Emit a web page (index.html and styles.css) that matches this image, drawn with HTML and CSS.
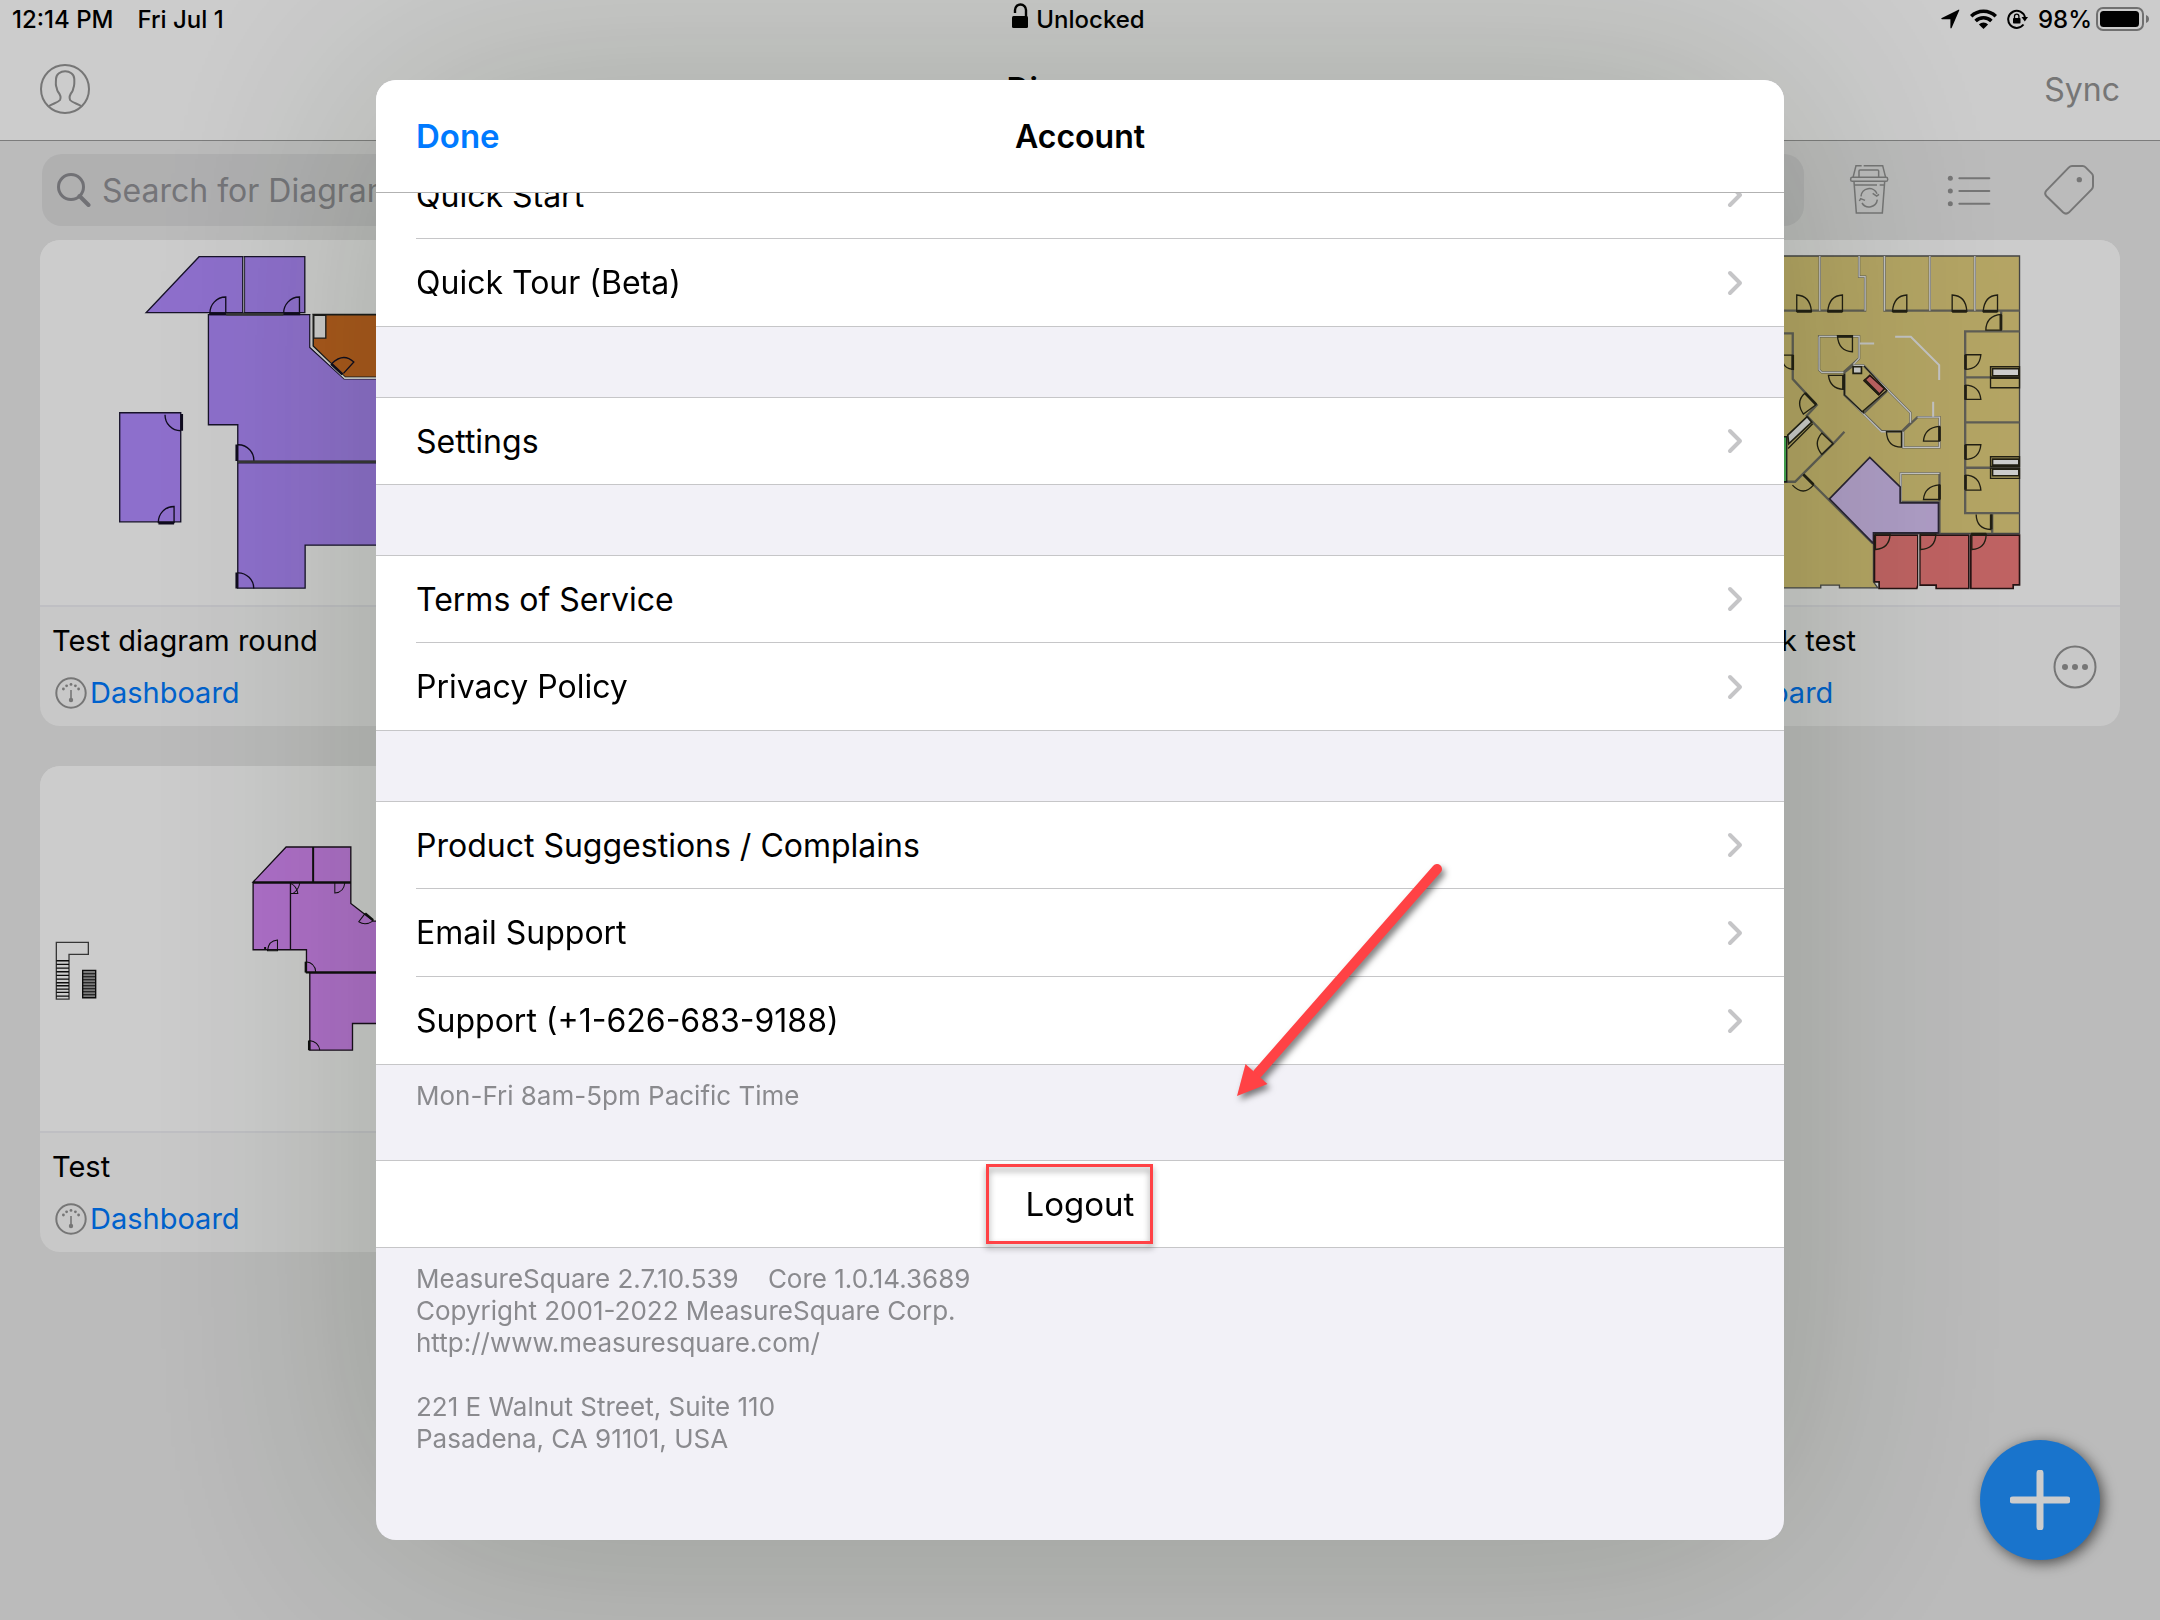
FILE: index.html
```html
<!DOCTYPE html>
<html lang="en">
<head>
<meta charset="utf-8">
<meta name="viewport" content="width=device-width, initial-scale=1">
<title>Diagrams</title>
<link rel="stylesheet" href="styles.css">
</head>
<body>
<svg class="defs" aria-hidden="true">
  <defs>
    <symbol id="chevron" viewBox="0 0 16 26"><path d="M3 3l10 10L3 23" fill="none" stroke="currentColor" stroke-width="4" stroke-linecap="round" stroke-linejoin="round"/></symbol>
    <symbol id="gauge" viewBox="0 0 32 32"><circle cx="16" cy="16" r="14.7" fill="none" stroke="currentColor" stroke-width="2"/><path d="M16 13v9" stroke="currentColor" stroke-width="1.6"/><g fill="currentColor"><circle cx="16" cy="23" r="2.2"/><circle cx="8.4" cy="12" r="1.4"/><circle cx="11.6" cy="8.8" r="1.4"/><circle cx="16" cy="7.4" r="1.4"/><circle cx="20.4" cy="8.8" r="1.4"/><circle cx="23.6" cy="12" r="1.4"/></g></symbol>
    <symbol id="more" viewBox="0 0 44 44"><circle cx="22" cy="22" r="20.5" fill="none" stroke="currentColor" stroke-width="2"/><g fill="currentColor"><circle cx="12" cy="22" r="3"/><circle cx="22" cy="22" r="3"/><circle cx="32" cy="22" r="3"/></g></symbol>
  </defs>
</svg>

<div class="app">
  <header class="topbar">
    <div class="status">
      <div class="status-left"><span>12:14 PM</span><span>Fri Jul 1</span></div>
      <div class="status-center">
        <svg width="16" height="26" viewBox="0 0 16 26" aria-hidden="true"><path d="M3 10V7a5.5 5.5 0 0 1 11 0v7" fill="none" stroke="#000" stroke-width="2.4"/><rect y="13" width="16" height="12" rx="1.5"/></svg>
        <span>Unlocked</span>
      </div>
      <div class="status-right">
        <svg width="19" height="20" viewBox="0 0 19 20" aria-hidden="true"><path d="M18.3 1.2L10.6 19q-.8 1-1.2-.2V10.300H1Q-.3 9.800.8 9L17.500.700q1-.3.8.5z"/></svg>
        <svg width="27" height="20" viewBox="0 0 27 20" aria-hidden="true"><g fill="none" stroke="#000" stroke-width="3.500"><path d="M1.200 7.300a17.500 17.500 0 0 1 24.600 0"/><path d="M5.600 12a11.200 11.200 0 0 1 15.800 0"/></g><path d="M13.500 20l-4.600-4.600a6.500 6.500 0 0 1 9.200 0z"/></svg>
        <svg width="21" height="20" viewBox="0 0 21 20" aria-hidden="true"><path d="M16.500 15.500A8.500 8.500 0 1 1 18 8.500" fill="none" stroke="#000" stroke-width="2"/><path d="M14.500 8H21l-3.200 4.600z"/><rect x="6" y="9" width="7.500" height="5.500" rx=".8"/><path d="M7.500 9V7.300a2.200 2.200 0 0 1 4.400 0V9" fill="none" stroke="#000" stroke-width="1.300"/></svg>
        <span class="battery">98%<svg width="54" height="26" viewBox="0 0 54 26" aria-hidden="true"><rect x="1" y="2" width="46" height="22" rx="6" fill="none" stroke="#000" stroke-opacity=".45" stroke-width="2"/><rect x="4" y="5" width="39" height="16" rx="3.500"/><path d="M50 9q3 1.200 3 4t-3 4z" fill-opacity=".45"/></svg></span>
      </div>
    </div>
    <nav class="nav">
      <button class="icon-button" aria-label="Account"><svg width="50" height="50" viewBox="0 0 50 50" fill="none" stroke="currentColor" stroke-width="2"><circle cx="25" cy="25" r="24"/><path d="M9 42c4-2.500 9-3.500 11-6 1.500-3-.5-6.500-2.200-8.500-1-1.500-.8-3.500-1.600-5C15.400 20 16 18 16 15c.3-10.300 18-10.300 18.300 0 0 3 .3 5-.4 7.500-.8 1.500-.6 3.500-1.600 5-1.700 2-3.500 5.500-2.200 8.500 2 2.500 7 3.500 11 6"/></svg></button>
      <h1 class="nav-title">Diagrams</h1>
      <button class="text-button sync">Sync</button>
    </nav>
  </header>

  <main class="library">
    <div class="toolbar">
      <label class="search">
        <svg width="34" height="34" viewBox="0 0 34 34" fill="none" stroke="currentColor" stroke-width="3" aria-hidden="true"><circle cx="14" cy="14" r="12.500"/><path d="M22.500 23l9 9" stroke-width="4" stroke-linecap="round"/></svg>
        <input type="search" placeholder="Search for Diagrams" aria-label="Search for Diagrams">
      </label>
      <div class="tools">
        <button class="icon-button" aria-label="Recycle bin"><svg width="50" height="50" viewBox="0 0 150 150" fill="none" stroke="currentColor" stroke-width="4.500"><path d="M27 38l9-36h17m6 0h57l9 36M45 36V18q0-3 3-3h53q3 0 3 3v18"/><rect x="20" y="37" width="111" height="12" rx="5"/><path d="M30 50l7 94h78l7-94M31 60h68m8 0h14"/><path d="M51 94a25 25 0 0 1 48-8M100 104a25 25 0 0 1-46 10M105 88l-7 5-12-8M46 108l4-7 13 5"/></svg></button>
        <button class="icon-button" aria-label="List view"><svg width="50" height="50" viewBox="0 0 150 150"><g fill="currentColor"><circle cx="19" cy="40" r="7.500"/><circle cx="19" cy="78" r="7.500"/><circle cx="19" cy="116" r="7.500"/></g><path d="M46 40h90M46 78h90M46 116h90" stroke="currentColor" stroke-width="6" stroke-linecap="round"/></svg></button>
        <button class="icon-button" aria-label="Tags"><svg width="50" height="50" viewBox="0 0 150 150"><path d="M84 3h32q5 0 9 4l18 18q4 4 4 9v30q0 5-4 9l-68 69q-9 8-18 0L7 93q-7-8 0-16L74 8q5-5 10-5z" fill="none" stroke="currentColor" stroke-width="6"/><circle cx="106" cy="44" r="8" fill="currentColor"/></svg></button>
      </div>
    </div>

    <div class="cards">
      <article class="card">
        <svg class="plan" viewBox="30 15 1458 1095" preserveAspectRatio="xMinYMin slice" role="img" aria-label="Floor plan">
          <g fill="#b18bff" stroke="#1d1733" stroke-width="4">
            <path d="M348 233L507 65H638V233zM643 65H824V233H643zM269 533H452V860H269z"/>
            <path d="M535 239H839V337L942 431H1240V679H623V569H535z"/>
            <path d="M623 683H1240V930H825V1059H623z"/>
          </g>
          <path d="M849 239H1240V427H945L849 333z" fill="#d46e23" stroke="#222" stroke-width="5"/>
          <path d="M851 241h36v68h-36z" fill="#fff" stroke="#222" stroke-width="4"/>
          <path d="M844 239v96l100 94h296" fill="none" stroke="#fff" stroke-width="5"/>
          <path d="M641 67v164" stroke="#fff" stroke-width="2"/>
          <g fill="none" stroke="#140f26" stroke-width="4">
            <path d="M587 237V186A47 47 0 0 0 540 237M808 237V186A47 47 0 0 0 761 237M405 539A47 47 0 0 0 452 587M432 864V814A47 47 0 0 0 385 864M623 629A47 47 0 0 1 671 681M623 1013A47 47 0 0 1 671 1060M905 385Q940 352 971 381L940 415"/>
            <path d="M538 237h50M760 237h50M455 537v50M385 864h47M620 628v50M620 1012v48M903 386l34 32" stroke-width="8"/>
            <path d="M588 238h172M623 680H1240" stroke="#444" stroke-width="8"/>
          </g>
        </svg>
        <div class="info">
          <div class="info-text">
            <h2 class="card-title">Test diagram round</h2>
            <a class="dash" href="#"><svg width="32" height="32"><use href="#gauge"/></svg>Dashboard</a>
          </div>
          <button class="icon-button" aria-label="More"><svg width="44" height="44"><use href="#more"/></svg></button>
        </div>
      </article>

      <article class="card card-last">
        <svg class="plan" viewBox="-318 15 1458 1095" preserveAspectRatio="xMinYMin slice" role="img" aria-label="Floor plan">
          <path d="M-200 63H838V895H400V1040L413 1058H298V1050H242V1058H-200z" fill="#e1ce7d" stroke="#555" stroke-width="4"/>
          <g fill="none" stroke="#77756a" stroke-width="7">
            <path d="M239 63V227M-200 227H375V125H357V63M433 63V227H838M569 63V227M704 63V227M783 230V288M838 289H675V834H838M675 427H838M675 562H838M675 698H838M756 836V894M0 295H158V432L230 510L200 542L280 625L313 590M280 625L165 740H100M190 718L265 793L398 925"/>
            <path d="M237 304H357V370L310 412H245L237 404zM340 391H370L511 533V563L486 588H424L313 480V412zM440 468L370 535M486 590L532 546H598V637H489V588M482 715H598V800H482zM598 800V895"/>
          </g>
          <g fill="none" stroke="#f4f4f4" stroke-width="4">
            <path d="M239 63V227M375 227V125H357V63M433 63V227M569 63V227M704 63V227M237 304H357V370L340 388M237 304V404L245 412H310M340 391H370L511 533V563M313 480L424 590H486M489 590V637H598V546H532M482 800V715H598"/>
            <path d="M465 305H512L597 390V435M359 325H402M579 500V545" stroke-width="6"/>
          </g>
          <path d="M268 791L389 667L480 755V803H595V893H400V925z" fill="#dac4f8" stroke="#332c40" stroke-width="5"/>
          <g fill="#ef7b7b" stroke="#301818" stroke-width="5">
            <path d="M403 900H533V1050L530 1060H417V1040H403zM539 900H686V1060H588V1050H539zM692 900H838V1049H819V1060H692zM389 421l44 40-17 18-44-42z"/>
          </g>
          <path d="M536 898V1056" stroke="#fff" stroke-width="3"/>
          <path d="M120 605h20V740h-20z" fill="#59d468" stroke="#222" stroke-width="4"/>
          <g fill="#fff" stroke="#2a2718" stroke-width="5">
            <path d="M757 401h79v21h-79zM757 672h79v18h-79zM757 702h79v20h-79zM339 395h25v20h-25zM143 600l58-55 14 16-69 65z"/>
          </g>
          <g fill="none" stroke="#2a2718" stroke-width="4">
            <path d="M751 395h87v31h-87zM751 430h87v28h-87zM751 665h87v29h-87zM751 699h87v31h-87zM313 416V480L366 530L440 466L372 393M144 640L218 566M370 535V528"/>
            <path d="M170 229V180Q210 182 214 229zM307 229V180Q267 182 263 229zM500 229V180Q461 182 457 229zM636 229V180Q677 182 680 229zM772 229V180Q733 182 729 229zM783 285V238Q738 242 737 285zM337 302V350Q295 348 292 302zM310 421V463Q270 461 265 421zM484 590V636Q441 636 439 590zM598 618V574Q553 578 550 618zM598 793V749Q553 753 550 793zM675 359H722Q718 402 675 403M675 493H722Q718 451 675 450M675 629H722Q718 672 675 673M675 765H722Q718 721 675 720M752 838V883Q709 881 708 838M695 897V943Q737 940 738 897zM541 897V943Q586 940 587 897zM406 897V943Q448 940 450 897zM195 474L228 509L190 537Q165 500 195 474zM245 594L279 626L245 658Q218 625 245 594zM190 718L220 750Q190 785 157 750M130 360H158V403Q135 400 130 385"/>
            <path d="M170 229h45M262 229h45M457 229h44M636 229h44M728 229h44M782 240v44M292 304h44M310 421v42M598 574v44M598 749v44M676 359v44M676 450v44M676 629v44M676 720v44M753 838v44M693 897h45M158 360v45M195 474l33 34M190 718l30 30M372 433l44 44" stroke-width="8"/>
          </g>
        </svg>
        <div class="info">
          <div class="info-text">
            <h2 class="card-title">North desk test</h2>
            <a class="dash" href="#"><svg width="32" height="32"><use href="#gauge"/></svg>Dashboard</a>
          </div>
          <button class="icon-button" aria-label="More"><svg width="44" height="44"><use href="#more"/></svg></button>
        </div>
      </article>

      <article class="card">
        <svg class="plan" viewBox="30 -42 1458 1095" preserveAspectRatio="xMinYMin slice" role="img" aria-label="Floor plan">
          <g fill="#da8bfb" stroke="#1c1020" stroke-width="4">
            <path d="M669 306L768 201H962V306zM669 308H781V509H669zM781 308H962V370L1030 423H1200V576H829V509H781zM839 578H1200V730H967V810H839z"/>
          </g>
          <g fill="none" stroke="#111" stroke-width="3">
            <path d="M849 201V306M669 307H962M827 577H1200" stroke-width="6"/>
            <path d="M781 340H803Q800 318 781 310M809 308Q806 328 790 339M914 308V339Q941 337 944 308M742 512V480Q715 482 712 512zM827 545Q855 548 857 576M837 781Q865 784 869 810M1005 400L986 425Q1005 438 1028 423"/>
            <path d="M827 545v32M837 781v29M1005 400l24 20M702 504h6" stroke-width="7"/>
          </g>
          <path d="M79 487H175V523H117V657H79z" fill="none" stroke="#444" stroke-width="4"/>
          <path d="M79 542h38M79 553h38M79 564h38M79 575h38M79 586h38M79 597h38M79 608h38M79 617h38M79 627h38M79 637h38M79 648h38" stroke="#111" stroke-width="4"/>
          <path d="M158 571h39v82h-39z" fill="#999" stroke="#111" stroke-width="4"/>
          <path d="M158 581h39M158 590h39M158 599h39M158 608h39M158 617h39M158 626h39M158 635h39M158 644h39" stroke="#111" stroke-width="3"/>
        </svg>
        <div class="info">
          <div class="info-text">
            <h2 class="card-title">Test</h2>
            <a class="dash" href="#"><svg width="32" height="32"><use href="#gauge"/></svg>Dashboard</a>
          </div>
          <button class="icon-button" aria-label="More"><svg width="44" height="44"><use href="#more"/></svg></button>
        </div>
      </article>
    </div>
  </main>

  <button class="fab" aria-label="New diagram"><svg width="60" height="60" viewBox="0 0 60 60"><path d="M30 3v54M3 30h54" stroke="#fff" stroke-width="7" stroke-linecap="round"/></svg></button>
</div>

<div class="backdrop">
  <section class="sheet" role="dialog" aria-labelledby="sheet-title">
    <header class="sheet-head">
      <button class="text-button done">Done</button>
      <h2 class="sheet-title" id="sheet-title">Account</h2>
    </header>
    <div class="sheet-body">
      <div class="group group-scrolled">
        <a class="row" href="#"><span>Quick Start</span><svg class="chev"><use href="#chevron"/></svg></a>
        <a class="row" href="#"><span>Quick Tour (Beta)</span><svg class="chev"><use href="#chevron"/></svg></a>
      </div>
      <div class="group">
        <a class="row" href="#"><span>Settings</span><svg class="chev"><use href="#chevron"/></svg></a>
      </div>
      <div class="group">
        <a class="row" href="#"><span>Terms of Service</span><svg class="chev"><use href="#chevron"/></svg></a>
        <a class="row" href="#"><span>Privacy Policy</span><svg class="chev"><use href="#chevron"/></svg></a>
      </div>
      <div class="group">
        <a class="row" href="#"><span>Product Suggestions / Complains</span><svg class="chev"><use href="#chevron"/></svg></a>
        <a class="row" href="#"><span>Email Support</span><svg class="chev"><use href="#chevron"/></svg></a>
        <a class="row" href="#"><span>Support (+1-626-683-9188)</span><svg class="chev"><use href="#chevron"/></svg></a>
        <svg class="arrow" width="220" height="250" viewBox="0 0 220 250" aria-hidden="true"><path d="M206 14L27 218" stroke="#ff4245" stroke-width="10" stroke-linecap="round"/><path d="M6 241L14.500 209 36.500 229z" fill="#ff4245"/></svg>
      </div>
      <p class="note">Mon-Fri 8am-5pm Pacific Time</p>
      <div class="group group-logout">
        <button class="logout">Logout<span class="marker"></span></button>
      </div>
      <p class="note about">MeasureSquare 2.7.10.539 &nbsp;&nbsp; Core 1.0.14.3689<br>Copyright 2001-2022 MeasureSquare Corp.<br>http://www.measuresquare.com/<br><br>221 E Walnut Street, Suite 110<br>Pasadena, CA 91101, USA</p>
    </div>
  </section>
</div>
</body>
</html>
```
FILE: styles.css
```css
* { box-sizing: border-box; }
body {
  margin: 0;
  background: #eaeaea;
  color: #000;
  font-family: Inter, "Liberation Sans", sans-serif;
  font-size: 32px;
}
h1, h2, p { margin: 0; font-weight: 400; }
svg { display: block; flex: none; }
button { border: 0; padding: 0; background: none; font: inherit; color: inherit; }
a { color: inherit; text-decoration: none; }
.defs { position: absolute; width: 0; height: 0; }

.app { min-height: 100vh; }
.topbar { background: #fff; border-bottom: 1px solid #9c9c9c; }
.status {
  display: grid;
  grid-template-columns: 1fr auto 1fr;
  align-items: center;
  height: 38px;
  padding: 0 10px 0 12px;
  font-size: 24px;
  font-weight: 500;
}
.status-left { display: flex; gap: 24px; }
.status-center { display: flex; align-items: center; gap: 8px; padding-right: 5px; }
.status-center svg { margin-bottom: 6px; }
.status-right { display: flex; align-items: center; justify-content: flex-end; gap: 10px; }
.battery { display: flex; align-items: center; gap: 4px; }
.nav {
  display: grid;
  grid-template-columns: 1fr auto 1fr;
  align-items: center;
  height: 102px;
  padding: 0 40px;
}
.nav-title { font-size: 32px; font-weight: 600; }
.icon-button { display: flex; color: #949494; }
.sync { justify-self: end; color: #949494; }

.toolbar { display: flex; align-items: center; gap: 40px; padding: 13px 66px 14px 42px; }
.search {
  flex: 1;
  display: flex;
  align-items: center;
  gap: 11px;
  height: 72px;
  padding: 0 15px;
  border-radius: 20px;
  background: #dcdcdd;
  color: #8e8e93;
}
.search input {
  flex: 1;
  min-width: 0;
  border: 0;
  padding: 0;
  background: none;
  font: inherit;
  color: inherit;
}
.search input::placeholder { color: #929297; opacity: 1; }
.tools { display: flex; gap: 50px; }

.cards {
  display: grid;
  grid-template-columns: repeat(4, minmax(0, 1fr));
  gap: 40px 45px;
  padding: 0 40px 40px;
}
.card { overflow: hidden; border-radius: 20px; background: #fafafa; }
.card-last { grid-column: 4; }
.plan { width: 100%; height: 365px; background: #fff; }
.info {
  display: flex;
  align-items: center;
  justify-content: space-between;
  padding: 8px 23px 7px 12px;
  border-top: 2px solid #efeff4;
  font-size: 29px;
  line-height: 52px;
}
.card-title { font-size: 29px; }
.dash { display: flex; align-items: center; gap: 3px; padding-left: 3px; color: #007aff; }
.dash svg { color: #949494; }

.fab {
  position: fixed;
  right: 60px;
  bottom: 60px;
  display: grid;
  place-items: center;
  width: 120px;
  height: 120px;
  border-radius: 50%;
  background: #2091ff;
  box-shadow: 3px 3px 14px rgba(0, 0, 0, .6);
}

.backdrop {
  position: fixed;
  inset: 0;
  display: flex;
  justify-content: center;
  padding: 80px 40px;
  background: rgba(0, 0, 0, .2);
}
.sheet {
  display: flex;
  flex-direction: column;
  width: 100%;
  max-width: 1408px;
  overflow: hidden;
  border-radius: 20px;
  background: #f2f1f7;
  box-shadow: 0 0 250px rgba(20, 35, 10, .22);
}
.sheet-head {
  display: grid;
  grid-template-columns: 1fr auto 1fr;
  align-items: center;
  flex: none;
  height: 113px;
  padding: 0 40px;
  border-bottom: 1px solid #b2b2b2;
  background: #fff;
}
.sheet-title { font-size: 32px; font-weight: 600; }
.done { justify-self: start; color: #007aff; font-size: 33px; font-weight: 600; }
.sheet-body { flex: 1; min-height: 0; overflow: hidden; }
.group {
  position: relative;
  margin-top: 70px;
  border-top: 1px solid #c6c6c8;
  border-bottom: 1px solid #c6c6c8;
  background: #fff;
}
.group-scrolled { margin-top: -42px; }
.row {
  display: flex;
  align-items: center;
  justify-content: space-between;
  height: 87px;
  margin-left: 40px;
  padding-right: 41px;
}
.row:first-child { height: 86px; }
.row + .row { height: 88px; border-top: 1px solid #c6c6c8; }
.chev { width: 16px; height: 26px; color: #c5c5c7; }
.note { padding: 15px 40px 48px; color: #8a8a8e; font-size: 26px; line-height: 32px; }
.about { padding-bottom: 80px; }
.group-logout { margin-top: 0; }
.logout { position: relative; display: block; width: 100%; height: 86px; font-size: 33px; }
.marker {
  position: absolute;
  top: 3px;
  left: calc(50% - 94px);
  width: 167px;
  height: 80px;
  border: 3px solid #ff4245;
  filter: drop-shadow(0 4px 3px rgba(0, 0, 0, .4));
}
.arrow {
  position: absolute;
  right: 333px;
  top: 53px;
  filter: drop-shadow(3px 4px 3px rgba(0, 0, 0, .5));
}
```
